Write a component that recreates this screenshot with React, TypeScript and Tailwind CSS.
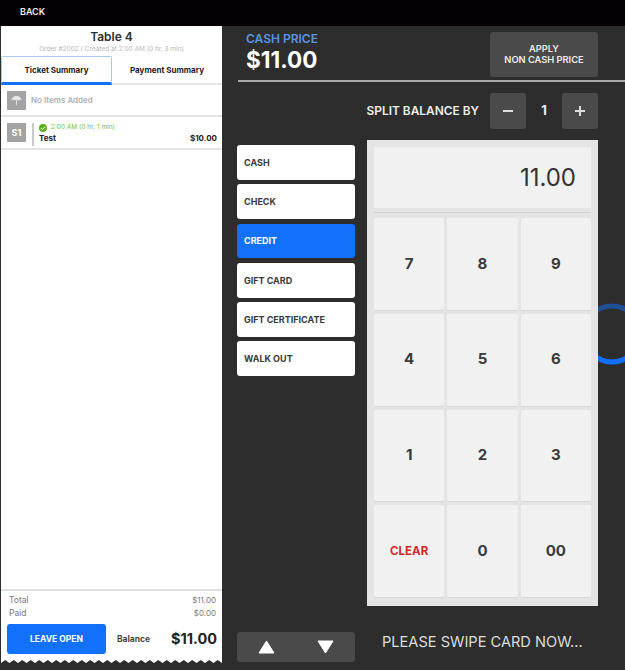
const payTypes = ["CASH", "CHECK", "CREDIT", "GIFT CARD", "GIFT CERTIFICATE", "WALK OUT"];
const keys = ["7", "8", "9", "4", "5", "6", "1", "2", "3", "CLEAR", "0", "00"];

function Scallops() {
  // torn receipt edge at the foot of the ticket
  let d = "M0 0H221V9";
  for (let x = 221; x > 0; x -= 8.5) d += `L${x - 4.25} 6L${x - 8.5} 9`;
  return (
    <svg width="221" height="10" viewBox="0 0 221 10" className="block shrink-0">
      <path d={d + "Z"} fill="#ffffff" />
    </svg>
  );
}

function Ticket() {
  return (
    <aside className="mb-[6px] ml-px flex w-[221px] shrink-0 flex-col self-stretch">
      <div className="flex flex-1 flex-col bg-white">
        <div className="h-[30px] pt-[3px] text-center">
          <div className="text-[12px] leading-[16px] font-semibold text-[#2d2d2d]">Table 4</div>
          <div className="text-[6.5px] leading-[9px] text-[#b5b5b5]">Order #2002 / Created at 2:00 AM (0 hr, 3 min)</div>
        </div>
        <div className="flex h-[29px] shrink-0 border-b-2 border-[#e8e8e8] text-[8px] font-bold text-[#222]">
          <div className="-mb-[2px] flex w-[111px] items-center justify-center rounded-t-[2px] border-x border-t border-x-[#a8c8f8] border-t-[#a8c8f8] border-b-[3px] border-b-[#1271fb]">Ticket Summary</div>
          <div className="flex flex-1 items-center justify-center">Payment Summary</div>
        </div>
        <div className="flex h-[32px] shrink-0 items-center gap-[5px] border-b-2 border-[#e4e4e4] pl-[6px]">
          <div className="flex h-[19px] w-[19px] items-center justify-center bg-[#a3a3a3]">
            <svg width="11" height="11" viewBox="0 0 12 12">
              <path d="M0 6C1 2.5 3.5 1 6 1s5 1.5 6 5L10 5 8 6 6 5 4 6 2 5Z M5.5 5.5h1V11h-1Z" fill="#e8e8e8" />
            </svg>
          </div>
          <span className="text-[8px] font-semibold text-[#b0b0b0]">No Items Added</span>
        </div>
        <div className="flex h-[33px] shrink-0 items-start border-b-2 border-[#e4e4e4] pt-[6px] pr-[5px] pl-[6px]">
          <div className="flex h-[19px] w-[19px] shrink-0 items-center justify-center bg-[#a3a3a3] text-[9px] font-bold text-white">S1</div>
          <div className="ml-[6px] h-[23px] w-[2px] shrink-0 bg-[#c9c9c9]" />
          <div className="ml-[5px] flex-1">
            <div className="flex h-[10px] items-center gap-[4px] text-[6.5px] text-[#76c02a]">
              <svg width="8" height="8" viewBox="0 0 8 8" className="shrink-0">
                <circle cx="4" cy="4" r="4" fill="#5fae1e" />
                <path d="M2 4.2 3.4 5.6 6 2.8" fill="none" stroke="#fff" strokeWidth="1" />
              </svg>
              2:00 AM (0 hr, 1 min)
            </div>
            <div className="flex justify-between text-[8px] leading-[10px] font-bold text-[#222]">
              <span>Test</span>
              <span>$10.00</span>
            </div>
          </div>
        </div>
        <div className="flex-1" />
        <div className="shrink-0 border-t-2 border-[#e0e0e0] pt-[3px] pr-[5px] pl-[6px]">
          <div className="flex justify-between pr-[1px] pl-[2px] text-[8px] leading-[13px] text-[#777]">
            <span className="text-[8.5px]">Total</span>
            <span>$11.00</span>
          </div>
          <div className="flex justify-between pr-[1px] pl-[2px] text-[8px] leading-[13px] text-[#777]">
            <span className="text-[8.5px]">Paid</span>
            <span>$0.00</span>
          </div>
          <div className="mt-[4px] flex items-center">
            <button className="h-[30px] w-[99px] rounded-[3px] bg-[#1271fb] text-[8.5px] font-bold text-white">LEAVE OPEN</button>
            <span className="ml-[11px] text-[8.5px] font-bold text-[#444]">Balance</span>
            <span className="ml-auto text-[14.5px] font-bold text-[#222]">$11.00</span>
          </div>
        </div>
      </div>
      <Scallops />
    </aside>
  );
}

function Keypad() {
  return (
    <div className="relative z-10 flex h-[466px] w-[231px] flex-col bg-[#e4e4e4] p-[7px] pb-[8px]">
      <div className="flex h-[61px] shrink-0 items-center justify-end bg-[#f1f1f1] pr-[15px] text-[24px] font-normal text-[#333]">11.00</div>
      <div className="mt-[4px] mb-[5px] h-[1px] shrink-0 bg-[#d2d2d2]" />
      <div className="grid flex-1 grid-cols-3 grid-rows-4 gap-[3px]">
        {keys.map((k) => (
          <button
            key={k}
            className={k === "CLEAR"
              ? "rounded-[2px] border-b border-[#d8d8d8] bg-[#f1f1f1] text-[11.5px] font-bold text-[#cf2a2a]"
              : "rounded-[2px] border-b border-[#d8d8d8] bg-[#f1f1f1] text-[15px] font-bold text-[#3a3a3a]"}
          >
            {k}
          </button>
        ))}
      </div>
    </div>
  );
}

export default function App() {
  return (
    <div className="flex h-[670px] w-[625px] flex-col overflow-hidden bg-[#2d2d2d] font-['Inter',sans-serif]">
      <header className="flex h-[26px] shrink-0 items-center bg-[#050003] pb-[2px] pl-[20px] text-[9px] font-semibold text-[#eee]">BACK</header>
      <div className="flex flex-1">
        <Ticket />
        <main className="relative ml-[15px] flex-1">
          <div className="ml-px flex h-[56px] items-start justify-between border-b-2 border-[#a9a9a9] pr-[27px] pl-[8px]">
            <div className="pt-[6px]">
              <div className="text-[12px] leading-[14px] font-semibold text-[#5b94e8]">CASH PRICE</div>
              <div className="text-[22.5px] leading-[28px] font-bold text-white">$11.00</div>
            </div>
            <button className="mt-[6px] h-[45px] w-[108px] rounded-[3px] bg-[#4a4a4a] pb-[2px] text-[9.3px] leading-[11px] font-semibold text-[#eee]">
              APPLY
              <br />
              NON CASH PRICE
            </button>
          </div>
          <div className="mt-[11px] flex items-center justify-end pr-[27px]">
            <span className="mr-[11px] text-[11.9px] font-semibold text-[#eee]">SPLIT BALANCE BY</span>
            <button className="flex h-[36px] w-[36px] items-center justify-center rounded-[3px] bg-[#4a4a4a] text-[#ddd]">
              <svg width="12" height="12" viewBox="0 0 12 12"><path d="M1 6h10" stroke="currentColor" strokeWidth="2" /></svg>
            </button>
            <span className="w-[36px] text-center text-[13px] font-bold text-[#eee]">1</span>
            <button className="flex h-[36px] w-[36px] items-center justify-center rounded-[3px] bg-[#4a4a4a] text-[#ddd]">
              <svg width="12" height="12" viewBox="0 0 12 12"><path d="M1 6h10M6 1v10" stroke="currentColor" strokeWidth="2" /></svg>
            </button>
          </div>
          <div className="mt-[11px] flex items-start">
            <div className="mt-[5px] flex w-[118px] flex-col gap-[4.5px]">
              {payTypes.map((p) => (
                <button
                  key={p}
                  className={p === "CREDIT"
                    ? "h-[34.8px] rounded-[3px] bg-[#1271fb] pl-[7px] text-left text-[9px] font-bold text-white"
                    : "h-[34.8px] rounded-[3px] bg-white pl-[7px] text-left text-[9px] font-bold text-[#3a3a3a]"}
                >
                  {p}
                </button>
              ))}
            </div>
            <div className="ml-[12px]">
              <Keypad />
            </div>
          </div>
          <div className="mt-[26px] flex items-center">
            <div className="flex h-[30px] w-[118px] items-center justify-between rounded-[3px] bg-[#4a4a4a] px-[21px]">
              <svg width="17" height="14" viewBox="0 0 17 14"><path d="M8.5 1 16 13H1Z" fill="#fff" stroke="#fff" strokeLinejoin="round" /></svg>
              <svg width="17" height="14" viewBox="0 0 17 14"><path d="M1 1H16L8.5 13Z" fill="#fff" stroke="#fff" strokeLinejoin="round" /></svg>
            </div>
            <span className="mb-[8px] ml-[27px] text-[14.6px] text-[#ddd]">PLEASE SWIPE CARD NOW...</span>
          </div>
          {/* spinner peeking out from behind the keypad */}
          <svg width="64" height="64" viewBox="0 0 64 64" className="absolute top-[276px] left-[343px]">
            <circle cx="32" cy="32" r="28" fill="none" stroke="#1f4f96" strokeWidth="5" />
            <path d="M4 32A28 28 0 0 0 60 32" fill="none" stroke="#1271fb" strokeWidth="5" />
          </svg>
        </main>
      </div>
    </div>
  );
}
